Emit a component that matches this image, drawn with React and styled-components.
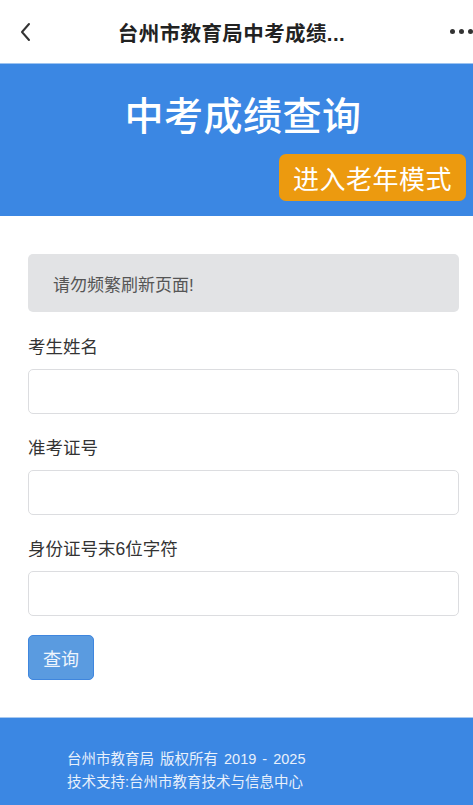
import React from 'react';
import styled, { createGlobalStyle } from 'styled-components';

const GlobalStyle = createGlobalStyle`
  html, body {
    margin: 0;
    padding: 0;
    background: #fff;
    font-family: "Liberation Sans", "Noto Sans CJK SC", sans-serif;
  }
  * { box-sizing: border-box; }
`;

const Page = styled.div`
  width: 473px;
  min-height: 805px;
  display: flex;
  flex-direction: column;
  overflow: hidden;
`;

const TopBar = styled.div`
  height: 63px;
  display: flex;
  align-items: center;
  justify-content: space-between;
  padding: 0 0 0 19px;
  background: #fff;
`;

const Back = styled.div`
  width: 20px;
  display: flex;
  align-items: center;
`;

const BarTitle = styled.div`
  flex: 1;
  text-align: center;
  font-size: 20.5px;
  font-weight: 600;
  color: #222;
  padding-right: 26px;
  letter-spacing: 0.4px;
`;

const Dots = styled.div`
  display: flex;
  gap: 4px;
  width: 25px;
  margin-right: -2px;
  span {
    width: 5px;
    height: 5px;
    border-radius: 50%;
    background: #333;
    flex-shrink: 0;
  }
`;

const Banner = styled.div`
  background: #3b87e3;
  border-top: 1px solid #9cc3f0;
  padding: 28px 7px 15px;
  display: flex;
  flex-direction: column;
  align-items: center;
`;

const Heading = styled.h1`
  margin: 0;
  padding-left: 13px;
  font-size: 39px;
  line-height: 50px;
  font-weight: 500;
  color: #fff;
  letter-spacing: 0.5px;
`;

const ElderButton = styled.button`
  align-self: flex-end;
  margin-top: 12px;
  height: 47px;
  padding: 0 14px;
  border: none;
  border-radius: 7px;
  background: #ec9a0f;
  color: #fff;
  font-family: inherit;
  font-size: 26px;
  letter-spacing: 0.5px;
`;

const Main = styled.div`
  padding: 38px 14px 37px 28px;
  display: flex;
  flex-direction: column;
`;

const Notice = styled.div`
  height: 58px;
  background: #e2e3e5;
  border-radius: 5px;
  display: flex;
  align-items: center;
  padding-left: 25px;
  font-size: 17px;
  color: #555;
  margin-bottom: 23px;
`;

const Group = styled.div`
  display: flex;
  flex-direction: column;
  margin-bottom: ${(p) => (p.last ? '19px' : '22px')};
`;

const Label = styled.label`
  font-size: 17.5px;
  line-height: 25px;
  color: #333;
  margin-bottom: 9px;
`;

const Input = styled.input`
  height: 45px;
  border: 1px solid #dcdde0;
  border-radius: 5px;
  background: #fff;
  outline: none;
`;

const Submit = styled.button`
  align-self: flex-start;
  width: 66px;
  height: 45px;
  background: #5a9be0;
  border: 1px solid #3f86de;
  border-radius: 5px;
  color: #eef5fd;
  font-family: inherit;
  font-size: 18px;
  padding: 0;
`;

const Footer = styled.div`
  flex: 1;
  background: #3b87e3;
  border-top: 1px solid #a8c9f0;
  padding: 30px 20px 20px 67px;
  color: #e8f0fb;
  font-size: 14.5px;
  line-height: 23px;
  word-spacing: 2px;
`;

const fields = ['考生姓名', '准考证号', '身份证号末6位字符'];

export default function App() {
  return (
    <Page>
      <GlobalStyle />
      <TopBar>
        <Back>
          <svg width="12" height="20" viewBox="0 0 12 20">
            <path d="M10 2 L3 10 L10 18" fill="none" stroke="#333" strokeWidth="2" strokeLinecap="round" strokeLinejoin="round" />
          </svg>
        </Back>
        <BarTitle>台州市教育局中考成绩...</BarTitle>
        <Dots>
          <span />
          <span />
          <span />
        </Dots>
      </TopBar>
      <Banner>
        <Heading>中考成绩查询</Heading>
        <ElderButton>进入老年模式</ElderButton>
      </Banner>
      <Main>
        <Notice>请勿频繁刷新页面!</Notice>
        {fields.map((f, i) => (
          <Group key={f} last={i === fields.length - 1}>
            <Label>{f}</Label>
            <Input type="text" />
          </Group>
        ))}
        <Submit>查询</Submit>
      </Main>
      <Footer>
        <div>台州市教育局 版权所有 2019 - 2025</div>
        <div>技术支持:台州市教育技术与信息中心</div>
      </Footer>
    </Page>
  );
}
